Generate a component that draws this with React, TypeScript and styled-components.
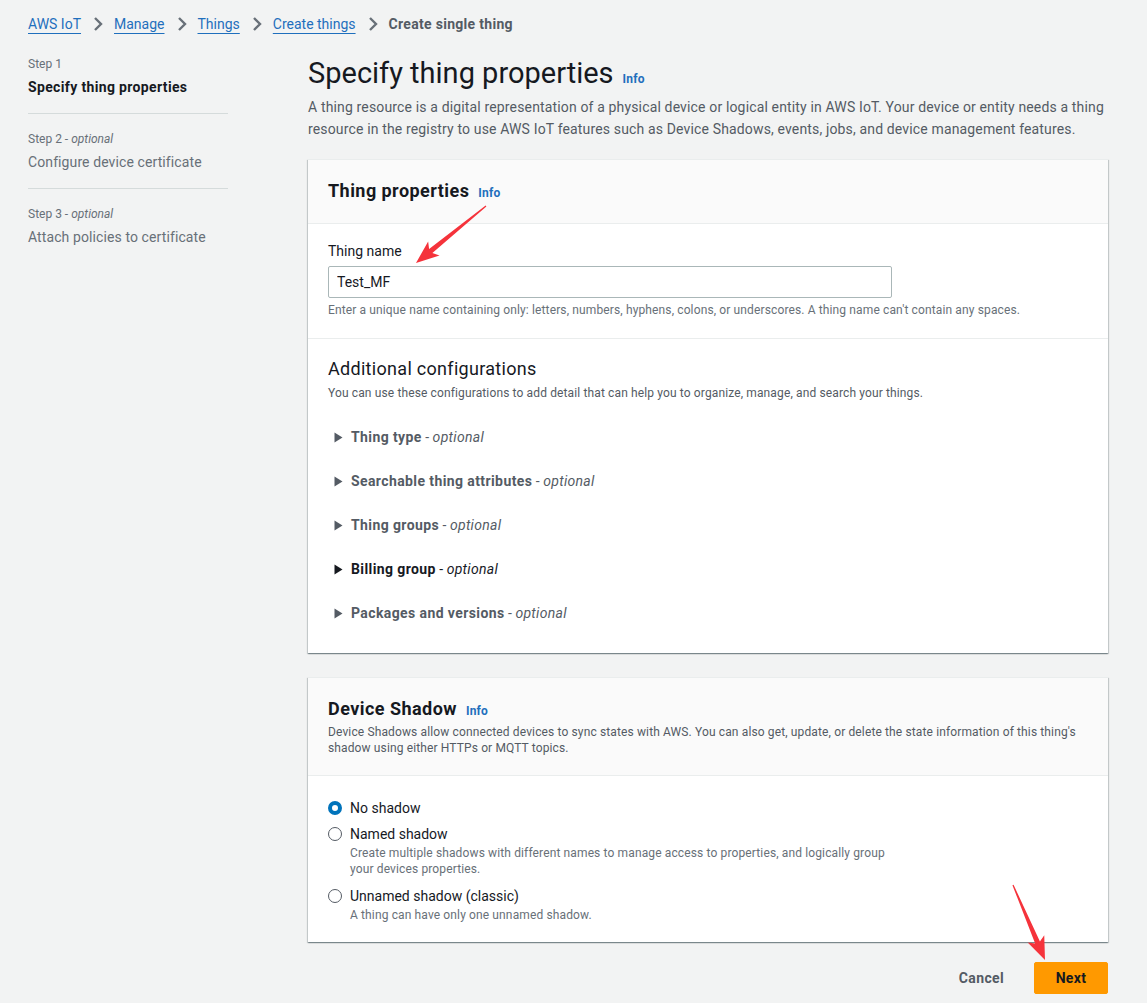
import React from "react";
import styled, { createGlobalStyle } from "styled-components";

const GlobalStyle = createGlobalStyle`
  html, body { margin: 0; padding: 0; }
  body {
    background: #f2f3f3;
    font-family: Roboto, "Noto Sans", Arial, sans-serif;
    color: #16191f;
    -webkit-font-smoothing: antialiased;
  }
  * { box-sizing: border-box; }
`;

const Page = styled.div`
  position: relative;
  width: 1147px;
  min-height: 1003px;
  padding: 12px 0 0 28px;
`;

const Breadcrumbs = styled.nav`
  display: flex;
  align-items: center;
  gap: 11px;
  height: 24px;
  font-size: 14px;
`;

const Crumb = styled.a`
  color: #1f6fbd;
  text-decoration: underline;
  text-underline-offset: 4px;
  text-decoration-thickness: 1px;
  cursor: pointer;
`;

const CurrentCrumb = styled.span`
  color: #545b64;
  font-weight: 700;
  letter-spacing: 0.3px;
`;

const Chevron = () => (
  <svg width="11" height="16" viewBox="0 0 11 16">
    <path d="M3 2 L9 8 L3 14" fill="none" stroke="#687078" strokeWidth="2.4" />
  </svg>
);

const Layout = styled.div`
  display: grid;
  grid-template-columns: 200px 800px;
  column-gap: 80px;
  margin-top: 19px;
`;

const SideNav = styled.ol`
  list-style: none;
  margin: 0;
  padding: 1px 0 0;
`;

const NavStep = styled.li<{ $last?: boolean }>`
  padding: 0 0 ${(p) => (p.$last ? "0" : "18px")};
  margin-bottom: ${(p) => (p.$last ? "0" : "17px")};
  border-bottom: ${(p) => (p.$last ? "none" : "1px solid #d5dbdb")};
`;

const StepLabel = styled.div`
  font-size: 12px;
  line-height: 16px;
  color: #687078;
  margin-bottom: 7px;
  em { font-style: italic; }
`;

const StepTitle = styled.div<{ $active?: boolean }>`
  font-size: 14px;
  line-height: 16px;
  color: ${(p) => (p.$active ? "#16191f" : "#687078")};
  font-weight: ${(p) => (p.$active ? 700 : 400)};
  letter-spacing: ${(p) => (p.$active ? "0.35px" : "0.1px")};
`;

const Main = styled.main`
  display: flex;
  flex-direction: column;
`;

const PageTitle = styled.h1`
  margin: 0 0 -1px;
  font-size: 29px;
  line-height: 36px;
  font-weight: 400;
  color: #16191f;
  display: flex;
  align-items: baseline;
  gap: 9px;
`;

const InfoLink = styled.a`
  color: #1f6fbd;
  font-size: 12px;
  font-weight: 700;
  letter-spacing: 0.2px;
  cursor: pointer;
`;

const Lead = styled.p`
  margin: 0;
  font-size: 14px;
  line-height: 22px;
  letter-spacing: 0.15px;
  color: #545b64;
`;

const Card = styled.section<{ $top: number }>`
  margin-top: ${(p) => p.$top}px;
  background: #fff;
  box-shadow: 0 1px 1px 0 rgba(0, 28, 36, 0.3), 1px 1px 1px 0 rgba(0, 28, 36, 0.15),
    -1px 1px 1px 0 rgba(0, 28, 36, 0.15);
  border-top: 1px solid #eaeded;
`;

const CardHeader = styled.header`
  background: #fafafa;
  border-bottom: 1px solid #eaeded;
  padding: 20px 20px 19px;
`;

const CardTitle = styled.h2`
  margin: 0;
  font-size: 18px;
  line-height: 22px;
  font-weight: 700;
  letter-spacing: 0.45px;
  display: flex;
  align-items: baseline;
  gap: 9px;
`;

const HeaderDesc = styled.p<{ $mt: number }>`
  margin: ${(p) => p.$mt}px 0 0;
  font-size: 12px;
  line-height: 16px;
  letter-spacing: 0.13px;
  color: #545b64;
`;

const CardSection = styled.div<{ $divider?: boolean; $pt: number; $pb: number }>`
  padding: ${(p) => p.$pt}px 20px ${(p) => p.$pb}px;
  border-bottom: ${(p) => (p.$divider ? "1px solid #eaeded" : "none")};
`;

const FieldLabel = styled.label`
  display: block;
  font-size: 14px;
  line-height: 22px;
  color: #16191f;
`;

const TextInput = styled.input`
  display: block;
  margin-top: 4px;
  width: 564px;
  height: 32px;
  padding: 4px 8px;
  border: 1px solid #aab7b8;
  border-radius: 2px;
  font: inherit;
  font-size: 14px;
  color: #16191f;
  background: #fff;
  outline: none;
`;

const Hint = styled.div`
  margin-top: 4px;
  font-size: 12px;
  line-height: 16px;
  letter-spacing: 0.13px;
  color: #687078;
`;

const SubTitle = styled.h3`
  margin: 0;
  font-size: 18px;
  line-height: 24px;
  font-weight: 400;
  letter-spacing: 0.3px;
`;

const ExpandList = styled.div`
  margin-top: 14px;
  display: flex;
  flex-direction: column;
`;

const ExpandRow = styled.div<{ $dark?: boolean }>`
  height: 44px;
  display: flex;
  align-items: center;
  gap: 8px;
  padding-left: 6px;
  font-size: 14px;
  color: ${(p) => (p.$dark ? "#16191f" : "#545b64")};
  b { font-weight: 700; letter-spacing: 0.4px; }
  em { font-style: italic; font-weight: 400; letter-spacing: 0.3px; }
`;

const Caret = ({ color }: { color: string }) => (
  <svg width="9" height="11" viewBox="0 0 9 11">
    <path d="M0.5 0.5 L8.5 5.5 L0.5 10.5 Z" fill={color} />
  </svg>
);

const RadioGroup = styled.div`
  display: flex;
  flex-direction: column;
`;

const RadioItem = styled.div<{ $mt: number }>`
  margin-top: ${(p) => p.$mt}px;
  display: grid;
  grid-template-columns: 14px 1fr;
  column-gap: 8px;
`;

const RadioCircle = styled.span<{ $checked?: boolean }>`
  margin-top: 4px;
  width: 14px;
  height: 14px;
  border-radius: 50%;
  border: ${(p) => (p.$checked ? "4px solid #0073bb" : "1.5px solid #545b64")};
  background: #fff;
`;

const RadioLabel = styled.div`
  font-size: 14px;
  line-height: 22px;
  color: #16191f;
`;

const RadioDesc = styled.div`
  grid-column: 2;
  font-size: 12px;
  line-height: 16px;
  letter-spacing: 0.13px;
  color: #687078;
`;

const Actions = styled.div`
  margin-top: 20px;
  display: flex;
  justify-content: flex-end;
  align-items: center;
  gap: 8px;
`;

const LinkButton = styled.button`
  border: none;
  background: transparent;
  font: inherit;
  font-size: 14px;
  font-weight: 700;
  letter-spacing: 0.35px;
  color: #545b64;
  padding: 4px 22px;
  cursor: pointer;
`;

const PrimaryButton = styled.button`
  border: 1px solid #ff9900;
  background: #ff9900;
  border-radius: 2px;
  font: inherit;
  font-size: 14px;
  font-weight: 700;
  letter-spacing: 0.35px;
  color: #16191f;
  height: 32px;
  width: 74px;
  padding: 0;
  cursor: pointer;
`;

const Overlay = styled.svg`
  position: absolute;
  left: 0;
  top: 0;
  pointer-events: none;
`;

const arrowPoints = (L: number) =>
  `0,-0.6 ${L - 19},-2.6 ${L - 23},-9 ${L},0 ${L - 23},9 ${L - 19},2.6 0,0.6`;

const Arrow = ({ x1, y1, x2, y2 }: { x1: number; y1: number; x2: number; y2: number }) => {
  const dx = x2 - x1;
  const dy = y2 - y1;
  const L = Math.sqrt(dx * dx + dy * dy);
  const a = (Math.atan2(dy, dx) * 180) / Math.PI;
  return (
    <g transform={`translate(${x1} ${y1}) rotate(${a})`}>
      <polygon points={arrowPoints(L)} fill="#f5333b" />
    </g>
  );
};

const expandItems = [
  { name: "Thing type" },
  { name: "Searchable thing attributes" },
  { name: "Thing groups" },
  { name: "Billing group", dark: true },
  { name: "Packages and versions" },
];

export default function App() {
  return (
    <>
      <GlobalStyle />
      <Page>
        <Breadcrumbs>
          <Crumb>AWS IoT</Crumb>
          <Chevron />
          <Crumb>Manage</Crumb>
          <Chevron />
          <Crumb>Things</Crumb>
          <Chevron />
          <Crumb>Create things</Crumb>
          <Chevron />
          <CurrentCrumb>Create single thing</CurrentCrumb>
        </Breadcrumbs>

        <Layout>
          <SideNav>
            <NavStep>
              <StepLabel>Step 1</StepLabel>
              <StepTitle $active>Specify thing properties</StepTitle>
            </NavStep>
            <NavStep>
              <StepLabel>
                Step 2 - <em>optional</em>
              </StepLabel>
              <StepTitle>Configure device certificate</StepTitle>
            </NavStep>
            <NavStep $last>
              <StepLabel>
                Step 3 - <em>optional</em>
              </StepLabel>
              <StepTitle>Attach policies to certificate</StepTitle>
            </NavStep>
          </SideNav>

          <Main>
            <PageTitle>
              Specify thing properties <InfoLink>Info</InfoLink>
            </PageTitle>
            <Lead>
              A thing resource is a digital representation of a physical device or logical entity in AWS IoT. Your
              device or entity needs a thing resource in the registry to use AWS IoT features such as Device Shadows,
              events, jobs, and device management features.
            </Lead>

            <Card $top={19}>
              <CardHeader>
                <CardTitle>
                  Thing properties <InfoLink>Info</InfoLink>
                </CardTitle>
              </CardHeader>
              <CardSection $divider $pt={16} $pb={20}>
                <FieldLabel>Thing name</FieldLabel>
                <TextInput defaultValue="Test_MF" />
                <Hint>
                  Enter a unique name containing only: letters, numbers, hyphens, colons, or underscores. A thing name
                  can't contain any spaces.
                </Hint>
              </CardSection>
              <CardSection $pt={18} $pb={18}>
                <SubTitle>Additional configurations</SubTitle>
                <HeaderDesc $mt={4}>
                  You can use these configurations to add detail that can help you to organize, manage, and search
                  your things.
                </HeaderDesc>
                <ExpandList>
                  {expandItems.map((it) => (
                    <ExpandRow key={it.name} $dark={it.dark}>
                      <Caret color={it.dark ? "#16191f" : "#545b64"} />
                      <span>
                        <b>{it.name}</b> - <em>optional</em>
                      </span>
                    </ExpandRow>
                  ))}
                </ExpandList>
              </CardSection>
            </Card>

            <Card $top={24}>
              <CardHeader>
                <CardTitle>
                  Device Shadow <InfoLink>Info</InfoLink>
                </CardTitle>
                <HeaderDesc $mt={2}>
                  Device Shadows allow connected devices to sync states with AWS. You can also get, update, or delete
                  the state information of this thing's shadow using either HTTPs or MQTT topics.
                </HeaderDesc>
              </CardHeader>
              <CardSection $pt={21} $pb={19}>
                <RadioGroup>
                  <RadioItem $mt={0}>
                    <RadioCircle $checked />
                    <RadioLabel>No shadow</RadioLabel>
                  </RadioItem>
                  <RadioItem $mt={4}>
                    <RadioCircle />
                    <RadioLabel>Named shadow</RadioLabel>
                    <RadioDesc>
                      Create multiple shadows with different names to manage access to properties, and logically group
                      <br />
                      your devices properties.
                    </RadioDesc>
                  </RadioItem>
                  <RadioItem $mt={8}>
                    <RadioCircle />
                    <RadioLabel>Unnamed shadow (classic)</RadioLabel>
                    <RadioDesc>A thing can have only one unnamed shadow.</RadioDesc>
                  </RadioItem>
                </RadioGroup>
              </CardSection>
            </Card>

            <Actions>
              <LinkButton>Cancel</LinkButton>
              <PrimaryButton>Next</PrimaryButton>
            </Actions>
          </Main>
        </Layout>

        <Overlay width="1147" height="1003" viewBox="0 0 1147 1003">
          <Arrow x1={486} y1={206} x2={416} y2={263} />
          <Arrow x1={1013} y1={885} x2={1045} y2={960} />
        </Overlay>
      </Page>
    </>
  );
}
